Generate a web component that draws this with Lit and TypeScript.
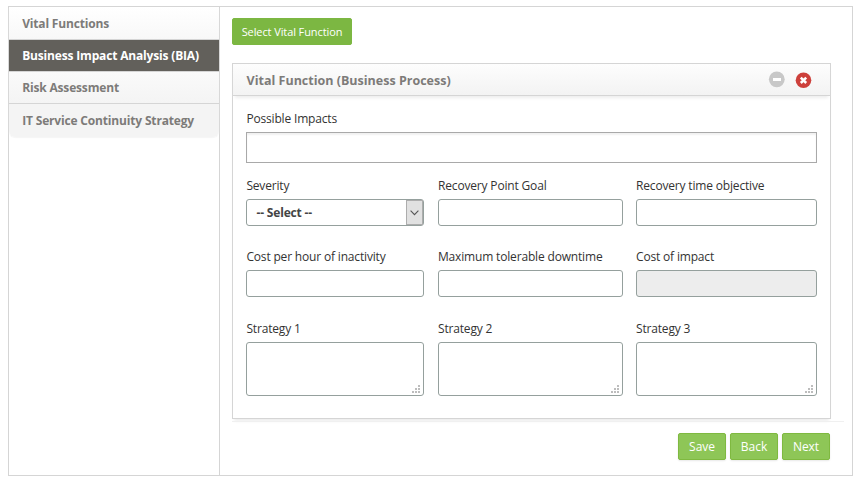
import { LitElement, html, css, svg, nothing } from "lit";
import { customElement, property } from "lit/decorators.js";
import { classMap } from "lit/directives/class-map.js";

type FieldKind = "text" | "select" | "area";

@customElement("form-field")
class FormField extends LitElement {
  @property() label = "";
  @property() kind: FieldKind = "text";
  @property({ type: Boolean }) disabled = false;

  static styles = css`
    :host { display: block; }
    .label { height: 17px; line-height: 17px; margin-bottom: 5px; padding-left: var(--label-inset, 0); color: #333; white-space: nowrap; }
    .control {
      position: relative;
      display: flex;
      align-items: stretch;
      box-sizing: border-box;
      height: 27px;
      border: 1px solid #95a09d;
      border-radius: 3px;
      background: #fff;
    }
    .area { height: 54px; }
    .disabled { background: #ededed; }
    .value { flex: 1; padding-left: 9.5px; line-height: 26px; font-weight: 700; color: #444; }
    .arrow {
      display: flex;
      align-items: center;
      justify-content: center;
      box-sizing: border-box;
      width: 17px;
      border: 1px solid #adadad;
      background: #e1e1e1;
    }
    .arrow svg { display: block; }
    .grip { position: absolute; right: 3px; bottom: 2px; }
  `;

  private dots() {
    const cells = [[6, 0], [3, 3], [6, 3], [0, 6], [3, 6], [6, 6]];
    return svg`${cells.map(([x, y]) => svg`<rect x=${x} y=${y} width="2" height="2" fill="#bdbdbd"></rect>`)}`;
  }

  render() {
    return html`
      <div class="label">${this.label}</div>
      <div class=${classMap({ control: true, area: this.kind === "area", disabled: this.disabled })}>
        ${this.kind === "select"
          ? html`<span class="value">-- Select --</span>
              <span class="arrow"><svg width="9" height="6" viewBox="0 0 9 6"><path d="M.6.7 4.5 4.6 8.4.7" fill="none" stroke="#555" stroke-width="1.1"></path></svg></span>`
          : nothing}
        ${this.kind === "area" ? html`<svg class="grip" width="8" height="8">${this.dots()}</svg>` : nothing}
      </div>
    `;
  }
}

@customElement("app-root")
class AppRoot extends LitElement {
  private tabs = ["Vital Functions", "Business Impact Analysis (BIA)", "Risk Assessment", "IT Service Continuity Strategy"];
  private activeTab = 1;
  private fields: { label: string; kind?: FieldKind; disabled?: boolean }[] = [
    { label: "Severity", kind: "select" },
    { label: "Recovery Point Goal" },
    { label: "Recovery time objective" },
    { label: "Cost per hour of inactivity" },
    { label: "Maximum tolerable downtime" },
    { label: "Cost of impact", disabled: true },
    { label: "Strategy 1", kind: "area" },
    { label: "Strategy 2", kind: "area" },
    { label: "Strategy 3", kind: "area" },
  ];

  static styles = css`
    :host {
      display: block;
      box-sizing: border-box;
      height: 482px;
      padding: 6px 8px;
      background: #fff;
      font: 12px "Open Sans", "Noto Sans", sans-serif;
      letter-spacing: -0.17px;
      color: #333;
    }
    .frame { display: flex; box-sizing: border-box; height: 470px; border: 1px solid #d5d5d5; }
    .side { box-sizing: border-box; width: 211px; border-right: 1px solid #d5d5d5; }
    .tabs { border-radius: 0 0 6px 6px; overflow: hidden; box-shadow: 0 1px 1px #f6f6f6; }
    .tab {
      box-sizing: border-box;
      height: 32px;
      padding-left: 13.2px;
      border-bottom: 1px solid #d5d5d5;
      background: linear-gradient(#fafafa, #f4f4f4);
      line-height: 31px;
      font-weight: 700;
      color: #7d7b79;
      white-space: nowrap;
    }
    .tab:first-child { height: 33px; line-height: 33px; background: linear-gradient(#fff, #f8f8f8); }
    .tab:last-child { height: 33px; line-height: 33px; border-bottom: 0; background: #f4f4f4; }
    .tab.active { background: #62605b; color: #fff; }
    .main { flex: 1; display: flex; flex-direction: column; padding: 11px 0 0 12px; }
    .btn {
      box-sizing: border-box;
      height: 27px;
      border: 1px solid #7fb940;
      border-radius: 2px;
      background: #8ec657;
      line-height: 26px;
      text-align: center;
      letter-spacing: -0.05px;
      color: #fff;
      white-space: nowrap;
    }
    .select { width: 120px; background: #7cb742; border-color: #7cb742; font-size: 11px; letter-spacing: -0.1px; }
    .panel {
      box-sizing: border-box;
      width: 599px;
      height: 356px;
      margin-top: 18px;
      border: 1px solid #d5d5d5;
      box-shadow: 0 4px 3px -2px #ececec;
    }
    .head {
      display: flex;
      align-items: center;
      box-sizing: border-box;
      height: 32px;
      padding: 0 18px 0 13.6px;
      border-bottom: 1px solid #d5d5d5;
      background: linear-gradient(#fdfdfd, #f3f3f3);
      box-shadow: 0 4px 3px -2px #ededed;
    }
    .title { flex: 1; padding-top: 2px; font-weight: 700; font-size: 12.5px; letter-spacing: 0; line-height: 32px; color: #7d7b79; }
    .icon { display: block; }
    .body { padding: 14px 13px 0; }
    .wide-label { height: 17px; line-height: 17px; padding-left: 0.4px; }
    .wide {
      box-sizing: border-box;
      height: 31px;
      margin-top: 5px;
      border: 1px solid #a9a9a9;
      box-shadow: inset 0 2px 2px #f1f1f1;
    }
    .grid { display: grid; grid-template-columns: 178px 185px 181px; column-gap: 14px; row-gap: 22px; margin-top: 14px; }
    .grid form-field:nth-child(3n + 1) { --label-inset: 0.4px; }
    .grid form-field:nth-child(3n) { margin-left: -1px; margin-right: 1px; }
    .grid form-field:nth-child(n + 7) { margin-top: 1px; }
    .rule { width: 612px; height: 1px; margin-top: 2px; background: #f0f0f0; }
    .actions { display: flex; justify-content: flex-end; gap: 4px; width: 598px; margin-top: 11px; }
    .actions .btn { width: 48px; box-shadow: 0 1px 2px #e8e8e8; }
  `;

  render() {
    return html`
      <div class="frame">
        <div class="side">
          <div class="tabs">
            ${this.tabs.map((t, i) => html`<div class=${classMap({ tab: true, active: i === this.activeTab })}>${t}</div>`)}
          </div>
        </div>
        <div class="main">
          <div class="btn select">Select Vital Function</div>
          <div class="panel">
            <div class="head">
              <span class="title">Vital Function (Business Process)</span>
              <svg class="icon" width="44" height="20" viewBox="0 0 44 20">
                <circle cx="8.8" cy="9.3" r="7.9" fill="#c8c8c8"></circle>
                <rect x="5" y="8" width="8" height="3" fill="#fff"></rect>
                <circle cx="35.5" cy="10.3" r="7.8" fill="#cd403b"></circle>
                <path d="m32.8 7.6 5.4 5.4m0-5.4-5.4 5.4" stroke="#fff" stroke-width="2.5"></path>
              </svg>
            </div>
            <div class="body">
              <div class="wide-label">Possible Impacts</div>
              <div class="wide"></div>
              <div class="grid">
                ${this.fields.map((f) => html`<form-field .label=${f.label} .kind=${f.kind ?? "text"} .disabled=${f.disabled ?? false}></form-field>`)}
              </div>
            </div>
          </div>
          <div class="rule"></div>
          <div class="actions">
            ${["Save", "Back", "Next"].map((t) => html`<div class="btn">${t}</div>`)}
          </div>
        </div>
      </div>
    `;
  }
}
